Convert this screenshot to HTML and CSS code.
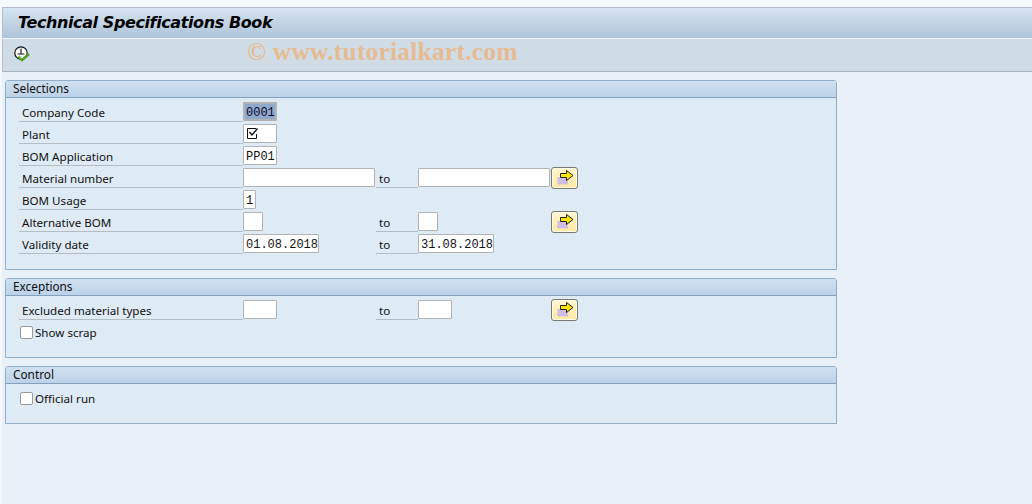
FILE: index.html
```html
<!DOCTYPE html>
<html lang="en">
<head>
<meta charset="utf-8">
<title>Technical Specifications Book</title>
<link rel="stylesheet" href="styles.css">
</head>
<body>
<div class="topstrip"></div>
<header class="titlebar"><h1>Technical Specifications Book</h1></header>
<div class="toolbar">
  <svg class="exec" width="18" height="18" viewBox="0 0 18 18">
    <circle cx="8" cy="7" r="6.2" fill="#fff" stroke="#111" stroke-width="1.2"/>
    <path d="M8 2.5V7.5M4.5 8H11.5" stroke="#111" stroke-width="1.1" fill="none"/>
    <path d="M5.5 10.5L9 14L16 8" stroke="#4f9d2a" stroke-width="2.6" fill="none"/>
    <path d="M6 10.2L9 13" stroke="#a7d86b" stroke-width="0.8" fill="none"/>
  </svg>
  <span class="watermark">© www.tutorialkart.com</span>
</div>
<main class="content">
  <section class="group group-sel">
    <h2>Selections</h2>
    <div class="row"><span class="label">Company Code</span><span class="cell"><span class="input w34 key">0001</span></span></div>
    <div class="row"><span class="label">Plant</span><span class="cell"><span class="input w34">
      <svg class="tick" width="13" height="13" viewBox="0 0 13 13"><path d="M10 1.5H1.5V11.5H10.5V7" fill="none" stroke="#111" stroke-width="1"/><path d="M3.5 5L6 8L11.5 1.5" fill="none" stroke="#111" stroke-width="1.4"/></svg>
    </span></span></div>
    <div class="row"><span class="label">BOM Application</span><span class="cell"><span class="input w34">PP01</span></span></div>
    <div class="row"><span class="label">Material number</span><span class="cell"><span class="input w132"></span></span><span class="to">to</span><span class="cell"><span class="input w132"></span></span><button class="more" type="button" aria-label="Multiple selection"><svg width="18" height="16" viewBox="0 0 18 16"><rect x="1.5" y="7" width="10.5" height="7.5" fill="#cfbde2"/><path d="M4.5 3.5H10.5V0.5L17 5.5L10.5 10.5V7.5H4.5Z" fill="#ffe600" stroke="#222" stroke-width="1"/></svg></button></div>
    <div class="row"><span class="label">BOM Usage</span><span class="cell"><span class="input w13">1</span></span></div>
    <div class="row"><span class="label">Alternative BOM</span><span class="cell"><span class="input w20"></span></span><span class="to">to</span><span class="cell"><span class="input w20"></span></span><button class="more" type="button" aria-label="Multiple selection"><svg width="18" height="16" viewBox="0 0 18 16"><rect x="1.5" y="7" width="10.5" height="7.5" fill="#cfbde2"/><path d="M4.5 3.5H10.5V0.5L17 5.5L10.5 10.5V7.5H4.5Z" fill="#ffe600" stroke="#222" stroke-width="1"/></svg></button></div>
    <div class="row"><span class="label">Validity date</span><span class="cell"><span class="input w76">01.08.2018</span></span><span class="to">to</span><span class="cell"><span class="input w76">31.08.2018</span></span></div>
  </section>
  <section class="group group-exc">
    <h2>Exceptions</h2>
    <div class="row"><span class="label">Excluded material types</span><span class="cell"><span class="input w34"></span></span><span class="to">to</span><span class="cell"><span class="input w34"></span></span><button class="more" type="button" aria-label="Multiple selection"><svg width="18" height="16" viewBox="0 0 18 16"><rect x="1.5" y="7" width="10.5" height="7.5" fill="#cfbde2"/><path d="M4.5 3.5H10.5V0.5L17 5.5L10.5 10.5V7.5H4.5Z" fill="#ffe600" stroke="#222" stroke-width="1"/></svg></button></div>
    <div class="row check"><span class="box"></span><span>Show scrap</span></div>
  </section>
  <section class="group group-ctl">
    <h2>Control</h2>
    <div class="row check"><span class="box"></span><span>Official run</span></div>
  </section>
</main>
</body>
</html>
```
FILE: styles.css
```css
* { box-sizing: border-box; }
html, body { height: 100%; }
body {
  margin: 0;
  height: 504px;
  overflow: hidden;
  background: #e9f0f8;
  border-left: 2px solid #f4f7fb;
  font-family: "Noto Sans", "DejaVu Sans", sans-serif;
  font-size: 11.6px;
  color: #111;
}
.topstrip { height: 8px; background: #f5f8fc; border-bottom: 1px solid #b2b9ca; }
.titlebar {
  height: 31px;
  background: linear-gradient(#d6e3f0, #adc4da);
  border-left: 1px solid #b2bfcd;
  border-bottom: 1px solid #f0f4f8;
  display: flex;
  align-items: center;
  padding: 0 0 2px 15px;
}
.titlebar h1 {
  margin: 0;
  font-size: 16px;
  font-weight: 700;
  font-style: italic;
  color: #000;
  font-family: "DejaVu Sans", sans-serif;
  letter-spacing: -0.4px;
}
.toolbar {
  height: 33px;
  background: #cfdce6;
  border-left: 1px solid #b2bfcd;
  border-bottom: 1px solid #a9b5c6;
  display: flex;
  align-items: center;
  padding-left: 10px;
}
.exec { flex: none; }
.watermark {
  margin-left: 216px;
  margin-top: -7px;
  font-family: "Liberation Serif", serif;
  font-weight: 700;
  font-size: 25.5px;
  letter-spacing: 0.2px;
  color: #e6bb92;
  white-space: nowrap;
}
.content { padding: 8px 0 0 3px; width: 835px; display: flex; flex-direction: column; gap: 8px; }
.group {
  background: #deeaf4;
  border: 1px solid #8fadc9;
  border-top-left-radius: 3px;
  border-top-right-radius: 3px;
}
.group-sel { height: 190px; }
.group-exc { height: 80px; }
.group-ctl { height: 58px; }
.group h2 {
  margin: 0 0 4px;
  height: 17px;
  padding-left: 7px;
  font-size: 11.8px;
  font-weight: 400;
  line-height: 15px;
  background: linear-gradient(#cfe0f0, #bcd2e8);
  border-bottom: 1px solid #84a0bf;
}
.row { display: flex; height: 22px; padding-left: 13px; }
.label, .to {
  height: 20px;
  line-height: 21px;
  border-bottom: 1px solid #b4bcc4;
  flex: none;
  white-space: nowrap;
}
.label { width: 224px; padding-left: 3px; }
.to { width: 42px; padding-left: 3px; }
.cell { width: 133px; flex: none; }
.input {
  display: block;
  height: 19px;
  background: #fff;
  border: 1px solid #b0b2b4;
  border-radius: 1px;
  padding-left: 2px;
  font-family: "Liberation Mono", monospace;
  font-size: 12px;
  line-height: 21px;
  color: #111;
  overflow: hidden;
}
.key { background: #8ea9c9; border: 2px solid #b0b2b4; padding-left: 1px; line-height: 19px; color: #0a0a30; }
.w13 { width: 13px; }
.w20 { width: 20px; }
.w34 { width: 34px; }
.w76 { width: 76px; }
.w132 { width: 132px; }
.tick { display: block; margin: 2px 0 0 0; }
.more {
  width: 27px;
  height: 22px;
  margin: -1px 0 0 0;
  padding: 0;
  background: linear-gradient(#fff5cf, #fde8a2);
  border: 1px solid #7a7a70;
  border-radius: 3px;
  box-shadow: inset 0 0 0 1px #fffbe6;
  display: flex;
  align-items: center;
  justify-content: center;
  flex: none;
}
.check { padding-left: 14px; align-items: flex-start; gap: 2px; line-height: 14px; }
.check span:last-child { margin-top: 4px; }
.box {
  width: 13px;
  height: 13px;
  margin-top: 4px;
  background: #fff;
  border: 1px solid #9a9a9a;
  border-radius: 2px;
  flex: none;
}
```
